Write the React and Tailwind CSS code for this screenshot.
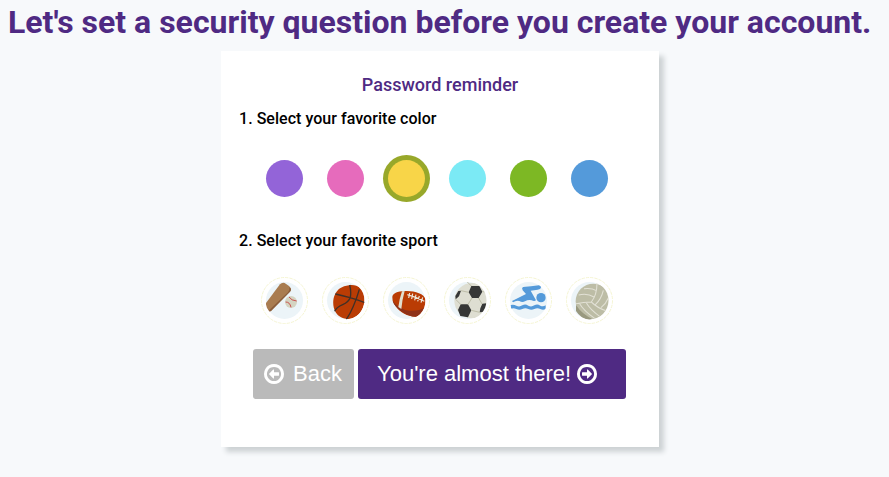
import React from "react";

const colors = [
  { name: "Purple", cls: "bg-[#9364d8]" },
  { name: "Pink", cls: "bg-[#e66bbc]" },
  { name: "Yellow", cls: "bg-[#f8d548]", selected: true },
  { name: "Cyan", cls: "bg-[#7beaf5]" },
  { name: "Green", cls: "bg-[#7db824]" },
  { name: "Blue", cls: "bg-[#549ada]" },
];

// Each badge is drawn on a 141-unit square: thin outer ring, pale disc, artwork.
function Badge({ id, label, children }) {
  return (
    <button type="button" aria-label={label} className="h-[47px] w-[47px]">
      <svg viewBox="0 0 141 141" className="block h-full w-full" fill="none">
        <defs>
          <clipPath id={id}>
            <circle cx="70.5" cy="70.5" r="57" />
          </clipPath>
        </defs>
        <circle cx="70.5" cy="70.5" r="69" stroke="#f5f5d3" strokeWidth="3" strokeDasharray="10 3" />
        <circle cx="70.5" cy="70.5" r="55.5" fill="#ecf4f8" />
        <g clipPath={`url(#${id})`}>{children}</g>
      </svg>
    </button>
  );
}

function Baseball() {
  return (
    <Badge id="baseball" label="Baseball">
      <path d="M15 78 57 22Q62 16 71 18L84 27Q92 34 89 42L30 102 24 103 15 92Z" fill="#a97c50" />
      <path d="M89 34Q92 39 87 44L30 102 26 104 24 100 81 46Q86 41 85 31Z" fill="#8b5e3c" />
      <circle cx="90" cy="75" r="18" fill="#d4d4c2" />
      <path d="M74 75Q87 75 90 91M84 60Q91 71 107 72" stroke="#c9504e" strokeWidth="3" />
    </Badge>
  );
}

function Basketball() {
  return (
    <Badge id="basketball" label="Basketball">
      <path d="M81 25C105 21 124 35 127 58C130 82 119 112 96 122C79 130 52 125 41 106C28 84 32 50 54 34Q65 27 81 25Z" fill="#ba3c04" />
      <path d="M40 51Q62 56 84 62T129 77M83 24Q88 43 85 61Q80 76 62 83Q43 91 38 103M112 37Q104 65 94 88Q86 108 73 127" stroke="#403027" strokeWidth="4" />
    </Badge>
  );
}

function Football() {
  return (
    <Badge id="football" label="Football">
      <path d="M28 61C27 49 44 43 65 42C90 40 125 49 127 67C129 88 124 115 101 119C77 121 52 107 38 88Q28 76 28 61Z" fill="#ba3c04" />
      <path d="M28 70Q48 98 78 101Q106 104 126 91Q121 114 101 119C76 121 45 100 33 81Z" fill="#8e3219" />
      <path d="M57 43 65 42Q58 66 55 96L46 90Q49 66 57 43Z" fill="#e1dfcf" />
      <path d="M73 53Q98 60 124 73M80 48 77 63M89 50 86 66M99 53 95 70M109 57 104 73M119 61 114 77" stroke="#ece7db" strokeWidth="3.5" />
    </Badge>
  );
}

function Soccer() {
  return (
    <Badge id="soccer" label="Soccer">
      <circle cx="84" cy="71" r="53" fill="#deded2" />
      <path d="M82 27H106L115 44 104 63H84L74 46ZM50 82H72L82 100 72 121 49 117 42 99ZM43 42 51 41 45 58 35 67 34 57ZM115 80 127 79 126 104 107 106 109 94Z" fill="#363737" />
      <path d="M84 63 72 82M104 63 114 81M74 46 51 41M115 44 128 45M82 100 107 106M50 82 35 67M82 27 70 15" stroke="#bdbda8" strokeWidth="3" />
    </Badge>
  );
}

function Swimming() {
  return (
    <Badge id="swimming" label="Swimming">
      <path d="M54 30Q78 28 102 25Q109 27 108 32Q107 37 98 38L77 41 93 70Q88 74 80 70Q70 67 60 73Q52 78 43 72Q34 69 24 76L21 72 63 51 53 40Q49 33 54 30Z" fill="#549ada" />
      <circle cx="108" cy="62" r="14" fill="#549ada" />
      <path d="M17 84Q26 81 34 86Q43 91 52 85Q61 80 70 86Q79 91 88 85Q97 80 106 86Q114 90 122 85V96Q114 100 106 96Q97 91 88 96Q79 101 70 96Q61 91 52 96Q43 101 34 96Q26 92 18 95Z" fill="#549ada" />
    </Badge>
  );
}

function Volleyball() {
  return (
    <Badge id="volleyball" label="Volleyball">
      <circle cx="82" cy="73" r="53" fill="#bdbda6" />
      <path d="M30 84C42 103 60 117 80 127L70 130Q44 124 30 102Z" fill="#99997f" />
      <path d="M30 80Q52 75 76 75Q93 54 93 18M76 75Q94 93 122 102M84 60Q63 47 38 54M91 41Q77 32 54 35M60 76Q72 98 102 119M40 79Q54 103 86 124M88 83Q106 66 112 40M105 92Q120 80 127 63" stroke="#e2e1d5" strokeWidth="3.2" />
    </Badge>
  );
}

function ArrowCircle({ className = "" }) {
  return (
    <svg viewBox="0 0 1536 1536" fill="currentColor" className={`h-5 w-5 shrink-0 ${className}`}>
      <path d="M1152 768q0 14-9 23l-320 320q-9 9-23 9-13 0-22.5-9.5t-9.5-22.5v-192h-352q-13 0-22.5-9.5t-9.5-22.5v-192q0-13 9.5-22.5t22.5-9.5h352v-192q0-14 9-23t23-9q12 0 24 10l319 319q9 9 9 23zM1312 768q0-148-73-273t-198-198-273-73-273 73-198 198-73 273 73 273 198 198 273 73 273-73 198-198 73-273zM1536 768q0 209-103 385.5t-279.5 279.5-385.5 103-385.5-103-279.5-279.5-103-385.5 103-385.5 279.5-279.5 385.5-103 385.5 103 279.5 279.5 103 385.5z" />
    </svg>
  );
}

export default function App() {
  return (
    <main className="h-screen overflow-hidden bg-[#f7f9fb] font-['Roboto',sans-serif]">
      <h1 className="h-[51px] pl-2 pt-[3px] text-[32px] leading-[38px] font-bold whitespace-nowrap text-[#4f2a83]">
        Let's set a security question before you create your account.
      </h1>
      <section className="ml-[221px] h-[396px] w-[438px] bg-white pt-[22px] shadow-[5px_5px_5px_#cdd2d4]">
        <h2 className="text-center text-lg leading-6 font-medium text-[#4f2a83]">Password reminder</h2>
        <h3 className="mt-2.5 pl-[18px] text-base leading-6 font-medium tracking-[0.04px] text-black">
          1. Select your favorite color
        </h3>
        <div className="mt-6 flex gap-3.5 pl-10">
          {colors.map((color) => (
            <button
              key={color.name}
              type="button"
              aria-label={color.name}
              className={`flex h-[47px] w-[47px] items-center justify-center rounded-full ${color.selected ? "bg-[#98a82a]" : ""}`}
            >
              <span className={`h-[37px] w-[37px] rounded-full ${color.cls}`} />
            </button>
          ))}
        </div>
        <h3 className="mt-[27px] pl-[18px] text-base leading-6 font-medium tracking-[0.04px] text-black">
          2. Select your favorite sport
        </h3>
        <div className="mt-6 flex gap-3.5 pl-10">
          <Baseball />
          <Basketball />
          <Football />
          <Soccer />
          <Swimming />
          <Volleyball />
        </div>
        <div className="mt-[25px] flex gap-1 pl-8 font-['Liberation_Sans',Arial,sans-serif] text-[22px] leading-[50px] text-white">
          <button type="button" className="flex h-[50px] w-[101px] items-center rounded-[3px] bg-[#bababa] pl-[11px]">
            <ArrowCircle className="-scale-x-100" />
            <span className="ml-[9px]">Back</span>
          </button>
          <button type="button" className="flex h-[50px] w-[268px] items-center rounded-[3px] bg-[#4f2a83] pl-[19px] whitespace-nowrap">
            <span>You're almost there!</span>
            <ArrowCircle className="ml-1.5" />
          </button>
        </div>
      </section>
    </main>
  );
}
